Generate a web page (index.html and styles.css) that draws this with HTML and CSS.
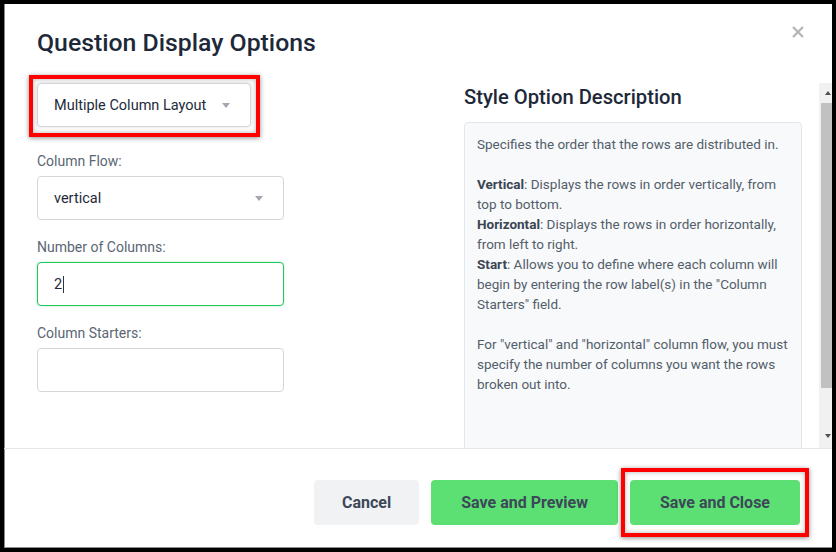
FILE: index.html
```html
<!DOCTYPE html>
<html lang="en">
<head>
<meta charset="utf-8">
<title>Question Display Options</title>
<link rel="stylesheet" href="styles.css">
</head>
<body>
<div class="frame">
  <header class="modal-head">
    <h1 class="modal-title">Question Display Options</h1>
    <button class="close" aria-label="Close">
      <svg viewBox="0 0 12 12" width="12" height="12"><path d="M1 1L11 11M11 1L1 11" stroke="#b4b4b4" stroke-width="2.2" fill="none"/></svg>
    </button>
  </header>
  <div class="modal-body">
    <div class="body-inner">
      <div class="col-left">
        <div class="style-select-wrap">
          <div class="select select-style"><span>Multiple Column Layout</span><span class="caret"></span></div>
          <span class="callout callout-a"></span>
        </div>
        <div class="field field-first">
          <div class="label">Column Flow:</div>
          <div class="select select-full"><span>vertical</span><span class="caret"></span></div>
        </div>
        <div class="field">
          <div class="label">Number of Columns:</div>
          <div class="input input-focus"><span>2</span><span class="cursor"></span></div>
        </div>
        <div class="field">
          <div class="label">Column Starters:</div>
          <div class="input"></div>
        </div>
      </div>
      <div class="col-right">
        <h2 class="desc-title">Style Option Description</h2>
        <div class="desc">
          <p>Specifies the order that the rows are distributed in.</p>
          <p><b>Vertical</b>: Displays the rows in order vertically, from<br>top to bottom.<br><b>Horizontal</b>: Displays the rows in order horizontally,<br>from left to right.<br><b>Start</b>: Allows you to define where each column will<br>begin by entering the row label(s) in the "Column<br>Starters" field.</p>
          <p>For "vertical" and "horizontal" column flow, you must<br>specify the number of columns you want the rows<br>broken out into.</p>
        </div>
      </div>
    </div>
    <div class="scrollbar">
      <div class="sb-btn sb-up"><span class="tri-up"></span></div>
      <div class="sb-thumb"></div>
      <div class="sb-track"></div>
      <div class="sb-btn sb-down"><span class="tri-down"></span></div>
    </div>
  </div>
  <footer class="modal-foot">
    <button class="btn btn-light">Cancel</button>
    <button class="btn btn-green">Save and Preview</button>
    <button class="btn btn-green">Save and Close<span class="callout callout-b"></span></button>
  </footer>
</div>
</body>
</html>
```
FILE: styles.css
```css
body {
  margin: 0;
  font-family: Roboto, "Noto Sans", sans-serif;
}

.frame {
  width: 836px;
  height: 552px;
  box-sizing: border-box;
  border: 4px solid #000;
  box-shadow: inset 1px -1px 0 #8c8c8c;
  background: #fff;
  display: flex;
  flex-direction: column;
  overflow: hidden;
}

.modal-head {
  display: flex;
  justify-content: space-between;
  align-items: flex-start;
  height: 79px;
  box-sizing: border-box;
  padding: 22px 28px 0 33px;
  flex: none;
}

.modal-title {
  margin: 1px 0 0;
  font-size: 24.8px;
  line-height: 32px;
  font-weight: 500;
  color: #1d2939;
}

.close {
  border: 0;
  background: none;
  padding: 0;
  width: 12px;
  height: 12px;
  display: block;
}

.close svg {
  display: block;
}

.modal-body {
  display: flex;
  height: 365px;
  flex: none;
}

.body-inner {
  flex: 1;
  display: flex;
  gap: 180px;
  padding-left: 33px;
}

.col-left {
  width: 247px;
  flex: none;
  display: flex;
  flex-direction: column;
  align-items: flex-start;
  gap: 17px;
}

.col-right {
  width: 338px;
  flex: none;
  overflow: hidden;
}

.style-select-wrap {
  position: relative;
}

.select {
  box-sizing: border-box;
  height: 44px;
  border: 1px solid #d3d6db;
  border-radius: 4px;
  display: flex;
  align-items: center;
  padding: 0 20px 0 16px;
  font-size: 14.5px;
  color: #1e2a3a;
  background: #fff;
}

.select-style {
  gap: 16px;
  box-shadow: 0 0 3px rgba(0, 0, 0, 0.15);
}

.select-full {
  justify-content: space-between;
  width: 100%;
}

.caret {
  width: 0;
  height: 0;
  border-left: 4.5px solid transparent;
  border-right: 4.5px solid transparent;
  border-top: 5px solid #a3a8b0;
}

.field {
  width: 100%;
}

.field-first {
  margin-top: 7px;
}

.label {
  font-size: 14px;
  line-height: 20px;
  color: #5a6673;
  margin-bottom: 5px;
}

.input {
  box-sizing: border-box;
  height: 44px;
  width: 100%;
  border: 1px solid #d3d6db;
  border-radius: 4px;
  padding: 0 16px;
  display: flex;
  align-items: center;
  font-size: 14.5px;
  color: #1e2a3a;
  background: #fff;
}

.input-focus {
  border-color: #22c55e;
  box-shadow: 0 0 3px rgba(34, 197, 94, 0.3);
}

.cursor {
  display: inline-block;
  width: 1px;
  height: 17px;
  background: #333;
  margin-left: 1px;
}

.desc-title {
  margin: 0 0 11px;
  font-size: 20.2px;
  line-height: 28px;
  font-weight: 500;
  color: #1d2939;
}

.desc {
  box-sizing: border-box;
  min-height: 420px;
  background: #f8f9fa;
  border: 1px solid #e3e6ea;
  border-radius: 4px;
  padding: 11px 12px;
  font-size: 13.5px;
  line-height: 20px;
  color: #535e6b;
  white-space: nowrap;
}

.desc p {
  margin: 0 0 20px;
}

.desc b {
  font-weight: 700;
  color: #3b4552;
}

.scrollbar {
  width: 13px;
  flex: none;
  background: #f1f1f1;
  display: flex;
  flex-direction: column;
}

.sb-btn {
  height: 20px;
  flex: none;
  display: flex;
  justify-content: flex-end;
  padding-right: 1px;
}

.sb-up {
  align-items: center;
}

.sb-down {
  align-items: flex-start;
  padding-top: 6px;
  box-sizing: border-box;
}

.tri-up {
  width: 0;
  height: 0;
  border-left: 3.5px solid transparent;
  border-right: 3.5px solid transparent;
  border-bottom: 4px solid #505050;
}

.tri-down {
  width: 0;
  height: 0;
  border-left: 3.5px solid transparent;
  border-right: 3.5px solid transparent;
  border-top: 4px solid #505050;
}

.sb-thumb {
  height: 285px;
  margin-left: 2px;
  background: #c1c1c1;
  flex: none;
}

.sb-track {
  flex: 1;
}

.modal-foot {
  flex: 1;
  border-top: 1px solid #e5e7eb;
  display: flex;
  justify-content: flex-end;
  align-items: flex-start;
  gap: 12px;
  padding: 31px 32px 0 0;
}

.btn {
  position: relative;
  height: 45px;
  padding: 0 30px;
  border: 0;
  border-radius: 4px;
  font-family: Roboto, "Noto Sans", sans-serif;
  font-size: 16px;
  font-weight: 700;
  color: #3c4858;
}

.btn-light {
  background: #f1f2f4;
  padding: 0 28px;
}

.btn-green {
  background: #5ce073;
}

.callout {
  position: absolute;
  border: 4px solid #ff0000;
  box-shadow: 0 1px 5px rgba(0, 0, 0, 0.45), inset 0 0 5px rgba(0, 0, 0, 0.3);
  pointer-events: none;
}

.callout-a {
  left: -8px;
  top: -8px;
  right: -9px;
  bottom: -10px;
}

.callout-b {
  left: -9px;
  right: -9px;
  top: -12px;
  bottom: -12px;
}
```
